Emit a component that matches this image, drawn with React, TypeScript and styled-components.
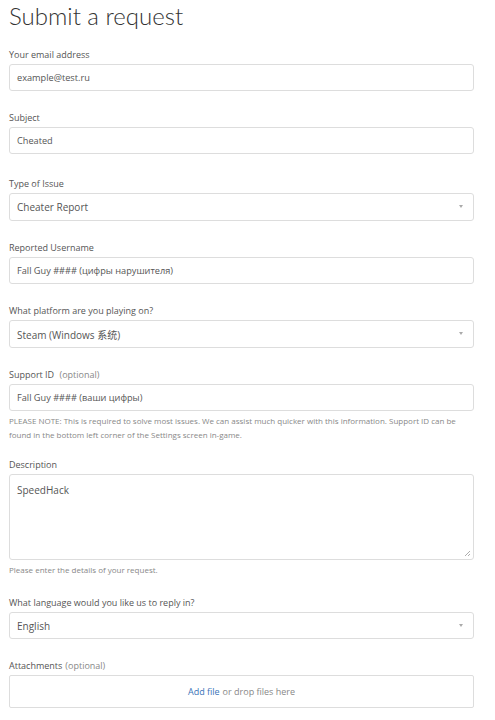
import React from 'react'
import styled, { createGlobalStyle } from 'styled-components'

const GlobalStyle = createGlobalStyle`
	body {
		margin: 0;
		background: #ffffff;
		font-family: 'Open Sans', 'Noto Sans CJK SC', sans-serif;
		color: #555555;
	}
`

const Page = styled.div`
	padding: 0 21px 0 9px;
	width: 465px;
`

const Title = styled.h1`
	font-family: Lato, 'Open Sans', sans-serif;
	font-size: 24px;
	font-weight: 300;
	color: #333333;
	margin: 0;
	line-height: 32px;
`

const Form = styled.form`
	display: flex;
	flex-direction: column;
	padding-top: 16px;
`

const Group = styled.div<{ gap?: number }>`
	display: flex;
	flex-direction: column;
	margin-bottom: ${(props) => props.gap ?? 20}px;
`

const Label = styled.label`
	font-size: 9px;
	line-height: 14px;
	color: #555555;
	margin-bottom: 2px;
`

const Optional = styled.span`
	color: #888888;
	margin-left: 3px;
`

const Box = styled.div<{ small?: boolean; height?: number }>`
	position: relative;
	box-sizing: border-box;
	height: ${(props) => props.height ?? 27}px;
	border: 1px solid #dddddd;
	border-radius: 3px;
	padding: 0 7px;
	display: flex;
	align-items: center;
	font-size: ${(props) => (props.small ? 9.2 : 10)}px;
	color: #555555;
	background: #ffffff;
`

const Arrow = styled.span`
	position: absolute;
	right: 10px;
	top: 50%;
	margin-top: -2px;
	width: 0;
	height: 0;
	border-left: 2.5px solid transparent;
	border-right: 2.5px solid transparent;
	border-top: 3px solid #aaaaaa;
`

const TextArea = styled(Box)`
	align-items: flex-start;
	padding-top: 8px;
`

const Grip = styled.svg`
	position: absolute;
	right: 2px;
	bottom: 2px;
`

const Hint = styled.p`
	font-size: 8px;
	line-height: 14px;
	color: #888888;
	margin: 3px 0 0;
`

const Drop = styled(Box)`
	justify-content: center;
	font-size: 9px;
	color: #888888;
	border-radius: 2px;
`

const Link = styled.a`
	color: #3a73b7;
	text-decoration: none;
	margin-right: 3px;
`

const Field: React.FC<{
	label: React.ReactNode
	value: string
	select?: boolean
	small?: boolean
	height?: number
	gap?: number
}> = ({ label, value, select, small, height, gap }) => (
	<Group gap={gap}>
		<Label>{label}</Label>
		<Box small={small} height={height}>
			{value}
			{select && <Arrow />}
		</Box>
	</Group>
)

export default function App() {
	return (
		<Page>
			<GlobalStyle />
			<Title>Submit a request</Title>
			<Form>
				<Field label="Your email address" value="example@test.ru" small />
				<Field label="Subject" value="Cheated" small gap={23} />
				<Field label="Type of Issue" value="Cheater Report" select height={28} />
				<Field label="Reported Username" value="Fall Guy #### (цифры нарушителя)" small />
				<Field label="What platform are you playing on?" value="Steam (Windows 系统)" select height={28} />
				<Group gap={16}>
					<Label>
						Support ID <Optional>(optional)</Optional>
					</Label>
					<Box small>Fall Guy #### (ваши цифры)</Box>
					<Hint>
						PLEASE NOTE: This is required to solve most issues. We can assist much quicker with this
						information. Support ID can be found in the bottom left corner of the Settings screen in-game.
					</Hint>
				</Group>
				<Group gap={19}>
					<Label>Description</Label>
					<TextArea height={86}>
						SpeedHack
						<Grip width="8" height="8" viewBox="0 0 8 8">
							<path d="M7 2 L2 7 M7 5 L5 7" stroke="#999" strokeWidth="0.8" />
						</Grip>
					</TextArea>
					<Hint>Please enter the details of your request.</Hint>
				</Group>
				<Field label="What language would you like us to reply in?" value="English" select />
				<Group gap={12}>
					<Label>
						Attachments<Optional>(optional)</Optional>
					</Label>
					<Drop height={33}>
						<Link href="#">Add file</Link>or drop files here
					</Drop>
				</Group>
			</Form>
		</Page>
	)
}
